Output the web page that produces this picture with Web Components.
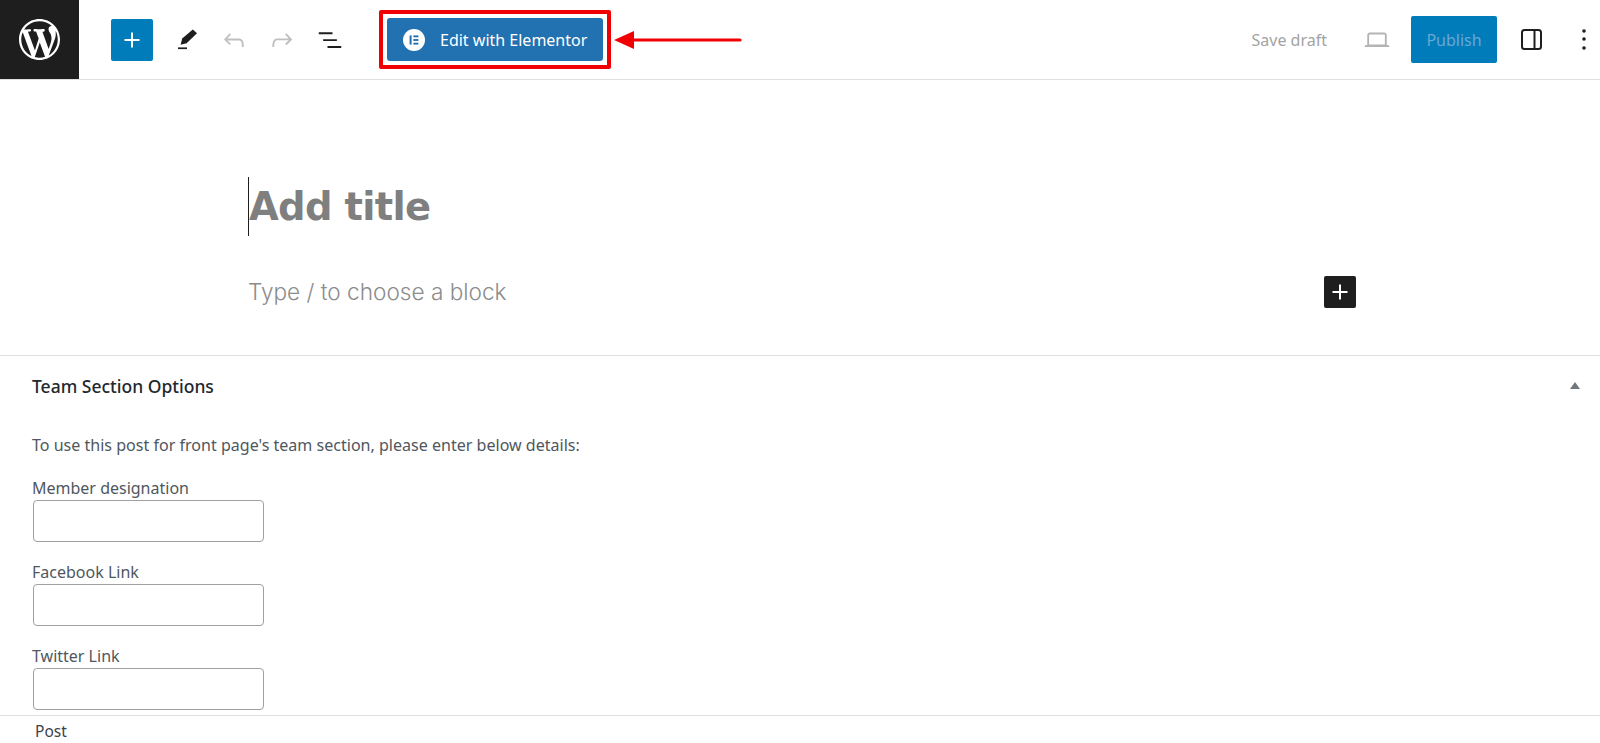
<!DOCTYPE html>
<html lang="en">
<head>
<meta charset="utf-8">
<title>Add New Post</title>
<style>
  html, body { margin:0; height:100%; background:#fff; overflow:hidden; }
  body { display:flex; flex-direction:column; height:743px; font-family:"Noto Sans","Open Sans",sans-serif; color:#1e1e1e; }
</style>
</head>
<body>
<editor-toolbar></editor-toolbar>
<editor-canvas></editor-canvas>
<meta-box heading="Team Section Options" intro="To use this post for front page's team section, please enter below details:">
  <meta-field label="Member designation"></meta-field>
  <meta-field label="Facebook Link"></meta-field>
  <meta-field label="Twitter Link"></meta-field>
</meta-box>
<editor-footer>Post</editor-footer>

<script>
const ICONS = {
  wp: '<svg width="41" height="41" viewBox="0 0 20 20" fill="#fff"><path d="M20 10c0-5.51-4.49-10-10-10C4.48 0 0 4.49 0 10c0 5.52 4.48 10 10 10 5.51 0 10-4.48 10-10zM7.78 15.37L4.37 6.22c.55-.02 1.17-.08 1.17-.08.5-.06.44-1.13-.06-1.11 0 0-1.45.11-2.37.11-.18 0-.37 0-.58-.01C4.12 2.69 6.87 1.11 10 1.11c2.33 0 4.45.87 6.05 2.34-.68-.11-1.65.39-1.65 1.58 0 .74.45 1.36.9 2.1.35.61.55 1.36.55 2.46 0 1.49-1.4 5-1.4 5l-3.03-8.37c.54-.02.82-.17.82-.17.5-.05.44-1.25-.06-1.22 0 0-1.44.12-2.38.12-.87 0-2.33-.12-2.33-.12-.5-.03-.56 1.2-.06 1.22l.92.08 1.26 3.41zM17.41 10c.24-.64.74-1.87.43-4.25.7 1.29 1.05 2.71 1.05 4.25 0 3.29-1.73 6.24-4.4 7.78.97-2.59 1.94-5.2 2.92-7.78zM6.1 18.09C3.12 16.65 1.11 13.53 1.11 10c0-1.3.23-2.48.72-3.59C3.25 10.3 4.67 14.2 6.1 18.09zm4.03-6.63l2.58 6.98c-.86.29-1.76.45-2.71.45-.79 0-1.57-.11-2.29-.33.81-2.38 1.62-4.74 2.42-7.1z"/></svg>',
  plus: '<svg width="30" height="30" viewBox="0 0 24 24" fill="currentColor"><path d="M18 11.2h-5.2V6h-1.6v5.2H6v1.6h5.2V18h1.6v-5.2H18z"/></svg>',
  pen: '<svg width="24" height="24" viewBox="0 0 24 24" fill="#1e1e1e"><path d="M18.8 1.5 23 5.2 12.6 15.2 6.6 16.8 8.2 10.6z"/><rect x="4" y="19.4" width="9" height="1.7"/></svg>',
  undo: '<svg width="30" height="30" viewBox="0 0 24 24" fill="#c0c0c0"><path d="M18.3 11.7c-.6-.6-1.4-.9-2.3-.9H6.7l2.9-3.3-1.1-1-4.5 5L8.5 16l1-1-2.7-2.7H16c.5 0 .9.2 1.3.5 1 1 1 3.4 1 4.5v.3h1.5v-.2c0-1.5 0-4.3-1.5-5.7z"/></svg>',
  redo: '<svg width="30" height="30" viewBox="0 0 24 24" fill="#c0c0c0"><path d="M15.6 6.5l-1.1 1 2.9 3.3H8c-.9 0-1.7.3-2.3.9-1.4 1.5-1.4 4.2-1.4 5.6v.2h1.5v-.3c0-1.1 0-3.5 1-4.5.3-.3.7-.5 1.3-.5h9.2L14.5 15l1.1 1.1 4.6-4.6-4.6-5z"/></svg>',
  list: '<svg width="30" height="30" viewBox="0 0 24 24" fill="#1e1e1e"><path d="M3 6h11v1.5H3V6Zm3.5 5.5h11V13h-11v-1.5ZM21 17H10v1.5h11V17Z" transform="translate(0 -.2)"/></svg>',
  laptop: '<svg width="30" height="30" viewBox="0 0 24 24" fill="#b4b4b4"><path d="M20.5 16h-.7V8c0-1.1-.9-2-2-2H6.2c-1.1 0-2 .9-2 2v8h-.7c-.8 0-1.5.7-1.5 1.5h20c0-.8-.7-1.5-1.5-1.5zM5.7 8c0-.3.2-.5.5-.5h11.6c.3 0 .5.2.5.5v7.6H5.7V8z"/></svg>',
  panel: '<svg width="23" height="23" viewBox="0 0 23 23" fill="none" stroke="#1e1e1e" stroke-width="2"><rect x="2" y="2" width="19" height="19" rx="2.5"/><path d="M14.5 2v19"/></svg>',
  dots: '<svg width="6" height="24" viewBox="0 0 6 24" fill="#1e1e1e"><circle cx="3" cy="3" r="1.8"/><circle cx="3" cy="11" r="1.8"/><circle cx="3" cy="20" r="1.8"/></svg>',
  elementor: '<svg width="22" height="22" viewBox="0 0 22 22"><circle cx="11" cy="11" r="11" fill="#fff"/><g fill="#2271b1"><rect x="6.6" y="6.4" width="2" height="9.2"/><rect x="10.4" y="6.4" width="5" height="1.9"/><rect x="10.4" y="10.05" width="5" height="1.9"/><rect x="10.4" y="13.7" width="5" height="1.9"/></g></svg>',
  arrow: '<svg width="128" height="20" viewBox="0 0 128 20" fill="#f00003"><path d="M0 10 20 1V8.4H126a1.6 1.6 0 0 1 0 3.2H20V19z"/></svg>'
};

class IconButton extends HTMLElement {
  constructor() {
    super();
    this.attachShadow({ mode: 'open' });
    const w = this.getAttribute('w') || 48;
    this.shadowRoot.innerHTML = `
      <style>
        :host { display:flex; align-items:center; justify-content:center; flex:none; width:${w}px; height:48px; }
        svg { display:block; }
      </style>
      ${ICONS[this.getAttribute('icon')] || ''}`;
  }
}
customElements.define('icon-button', IconButton);

class ElementorButton extends HTMLElement {
  constructor() {
    super();
    this.attachShadow({ mode: 'open' });
    this.shadowRoot.innerHTML = `
      <style>
        :host { display:block; flex:none; padding:4px; border:4px solid #f00003; border-radius:2px; }
        .btn { display:flex; align-items:center; box-sizing:border-box; width:216px; height:43px; padding-left:16px; gap:15px; background:#2271b1; border-radius:3px; color:#fff; font-size:16px; }
        svg { display:block; flex:none; }
      </style>
      <div class="btn">${ICONS.elementor}<span><slot></slot></span></div>`;
  }
}
customElements.define('elementor-button', ElementorButton);

class EditorToolbar extends HTMLElement {
  constructor() {
    super();
    this.attachShadow({ mode: 'open' });
    this.shadowRoot.innerHTML = `
      <style>
        :host { display:flex; flex:none; align-items:center; height:79px; border-bottom:1px solid #e0e0e0; background:#fff; }
        .logo { display:flex; align-items:center; justify-content:center; flex:none; width:79px; height:79px; background:#1e1e1e; }
        .add { display:flex; align-items:center; justify-content:center; flex:none; width:42px; height:42px; margin:0 9px 0 32px; background:#007cba; border-radius:2px; color:#fff; }
        .arrow { display:flex; margin-left:3px; }
        .right { display:flex; align-items:center; margin-left:auto; }
        .save { font-size:16px; color:#a3a3a3; margin-right:27px; }
        .publish { display:flex; align-items:center; justify-content:center; width:86px; height:47px; margin:0 23px 0 11px; background:#007cba; border-radius:2px; color:#66a9d6; font-size:16px; }
        svg { display:block; }
      </style>
      <div class="logo">${ICONS.wp}</div>
      <div class="add">${ICONS.plus}</div>
      <icon-button icon="pen"></icon-button>
      <icon-button icon="undo"></icon-button>
      <icon-button icon="redo"></icon-button>
      <icon-button icon="list"></icon-button>
      <elementor-button style="margin-left:25px">Edit with Elementor</elementor-button>
      <div class="arrow">${ICONS.arrow}</div>
      <div class="right">
        <span class="save">Save draft</span>
        <icon-button icon="laptop" w="46"></icon-button>
        <div class="publish">Publish</div>
        <icon-button icon="panel" w="23"></icon-button>
        <icon-button icon="dots" w="6" style="margin:0 13px 0 38px"></icon-button>
      </div>`;
  }
}
customElements.define('editor-toolbar', EditorToolbar);

class EditorCanvas extends HTMLElement {
  constructor() {
    super();
    this.attachShadow({ mode: 'open' });
    this.shadowRoot.innerHTML = `
      <style>
        :host { display:block; flex:none; height:275px; box-sizing:border-box; padding:97px 244px 0 248px; font-family:Inter,"Noto Sans",sans-serif; }
        .title { height:59px; line-height:59px; border-left:1px solid #1e1e1e; font-family:"DejaVu Sans",sans-serif; font-size:38.5px; font-weight:700; letter-spacing:-.7px; color:#7f7f7f; }
        .block { display:flex; align-items:center; justify-content:space-between; margin-top:39px; height:34px; font-size:22.6px; font-weight:300; color:#8c8c8c; }
        .block span:first-child { margin-top:-2px; }
        .plus { display:flex; align-items:center; justify-content:center; width:32px; height:32px; background:#1e1e1e; border-radius:2px; color:#fff; }
        svg { display:block; }
      </style>
      <div class="title">Add title</div>
      <div class="block"><span>Type / to choose a block</span><span class="plus">${ICONS.plus}</span></div>`;
  }
}
customElements.define('editor-canvas', EditorCanvas);

class MetaBox extends HTMLElement {
  constructor() {
    super();
    this.attachShadow({ mode: 'open' });
    this.shadowRoot.innerHTML = `
      <style>
        :host { display:block; flex:1; min-height:0; overflow:hidden; box-sizing:border-box; border-top:1px solid #e0e0e0; padding:0 20px 0 32px; }
        .head { display:flex; align-items:center; justify-content:space-between; height:60px; font-size:17.5px; font-weight:500; color:#23282d; }
        .tri { width:0; height:0; border:5px solid transparent; border-top:0; border-bottom:7px solid #72777c; margin-top:-1px; }
        p { margin:0 0 21px; padding-top:19px; line-height:20px; font-size:16.06px; color:#50575e; }
      </style>
      <div class="head"><span></span><i class="tri"></i></div>
      <p></p>
      <slot></slot>`;
    this.shadowRoot.querySelector('.head span').textContent = this.getAttribute('heading');
    this.shadowRoot.querySelector('p').textContent = this.getAttribute('intro');
  }
}
customElements.define('meta-box', MetaBox);

class MetaField extends HTMLElement {
  constructor() {
    super();
    this.attachShadow({ mode: 'open' });
    this.shadowRoot.innerHTML = `
      <style>
        :host { display:block; height:84px; }
        label { display:block; height:24px; line-height:24px; font-size:16px; color:#50575e; }
        .input { box-sizing:border-box; width:231px; height:42px; margin-left:1px; border:1px solid #a0a0a0; border-radius:4px; background:#fff; }
      </style>
      <label></label>
      <div class="input"></div>`;
    this.shadowRoot.querySelector('label').textContent = this.getAttribute('label');
  }
}
customElements.define('meta-field', MetaField);

class EditorFooter extends HTMLElement {
  constructor() {
    super();
    this.attachShadow({ mode: 'open' });
    this.shadowRoot.innerHTML = `
      <style>
        :host { display:flex; flex:none; align-items:center; height:28px; box-sizing:border-box; padding:3px 0 0 35px; border-top:1px solid #e0e0e0; background:#fff; font-size:15.5px; color:#3c434a; }
      </style>
      <slot></slot>`;
  }
}
customElements.define('editor-footer', EditorFooter);
</script>
</body>
</html>
